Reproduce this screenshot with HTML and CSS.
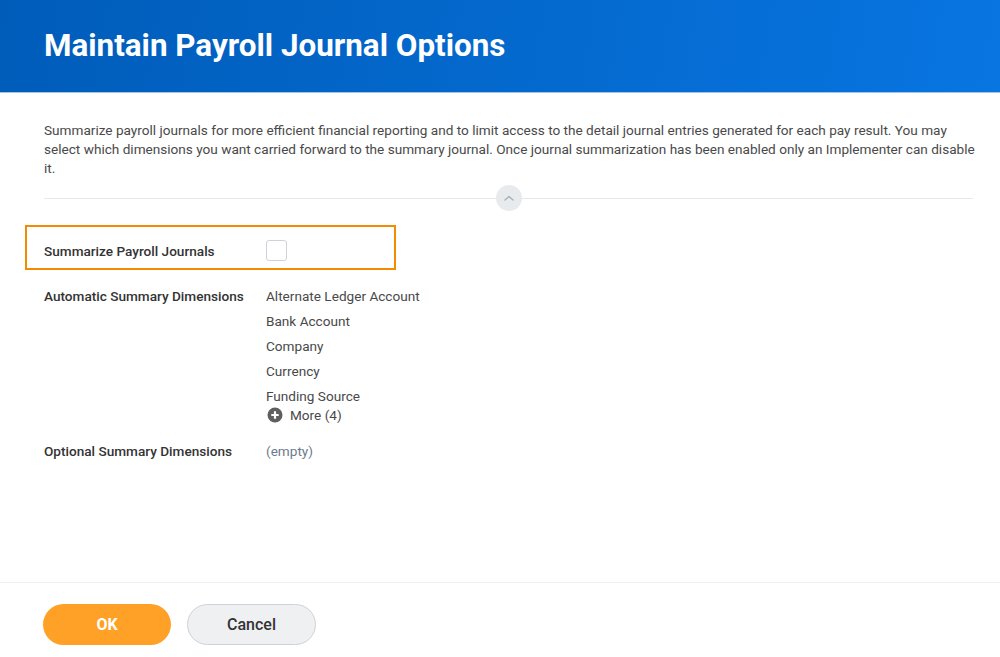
FILE: index.html
```html
<!DOCTYPE html>
<html>
<head>
<meta charset="utf-8">
<link rel="stylesheet" href="styles.css">
</head>
<body>
<div class="page">
  <header class="header">
    <h1 class="title">Maintain Payroll Journal Options</h1>
  </header>
  <main class="content">
    <p class="intro">Summarize payroll journals for more efficient financial reporting and to limit access to the detail journal entries generated for each pay result. You may select which dimensions you want carried forward to the summary journal. Once journal summarization has been enabled only an Implementer can disable it.</p>
    <div class="divider">
      <span class="collapse">
        <svg width="12" height="8" viewBox="0 0 12 8"><path d="M2 6 L6 2.5 L10 6" fill="none" stroke="#a6afb8" stroke-width="1.4" stroke-linecap="round" stroke-linejoin="round"/></svg>
      </span>
    </div>
    <div class="highlight">
      <div class="label">Summarize Payroll Journals</div>
      <span class="checkbox"></span>
    </div>
    <div class="field">
      <div class="label">Automatic Summary Dimensions</div>
      <div class="values">
        <div class="value">Alternate Ledger Account</div>
        <div class="value">Bank Account</div>
        <div class="value">Company</div>
        <div class="value">Currency</div>
        <div class="value">Funding Source</div>
        <div class="more">
          <svg width="16" height="16" viewBox="0 0 16 16"><circle cx="8" cy="8" r="7.5" fill="#5f5f5f"/><path d="M8 4.3 V11.7 M4.3 8 H11.7" stroke="#fff" stroke-width="2.2"/></svg>
          <span>More (4)</span>
        </div>
      </div>
    </div>
    <div class="field optional">
      <div class="label">Optional Summary Dimensions</div>
      <div class="values"><div class="empty">(empty)</div></div>
    </div>
  </main>
  <footer class="footer">
    <button class="btn btn-ok">OK</button>
    <button class="btn btn-cancel">Cancel</button>
  </footer>
</div>
</body>
</html>
```
FILE: styles.css
```css
html, body {
  margin: 0;
  padding: 0;
  background: #fff;
}
body {
  font-family: Roboto, "Liberation Sans", Arial, sans-serif;
  color: #333;
}
.page {
  height: 657px;
  display: flex;
  flex-direction: column;
  overflow: hidden;
}
.header {
  height: 92px;
  flex: none;
  background: linear-gradient(100deg, #005cb9 0%, #0875e1 100%);
  border-bottom: 1px solid #9cc4ee;
  display: flex;
  align-items: center;
  padding-left: 44px;
  box-sizing: content-box;
}
.title {
  margin: 0;
  color: #fff;
  font-size: 31.4px;
  font-weight: 700;
  letter-spacing: 0;
  padding-bottom: 2px;
}
.content {
  flex: 1;
  padding: 0 27px 0 44px;
}
.intro {
  margin: 28px -8px 0 0;
  font-size: 13.6px;
  line-height: 19px;
  color: #494949;
}
.divider {
  margin-top: 20px;
  height: 1px;
  background: #e6e8ea;
  position: relative;
}
.collapse {
  position: absolute;
  left: 452px;
  top: -13px;
  width: 26px;
  height: 26px;
  border-radius: 50%;
  background: #e8ebee;
  display: flex;
  align-items: center;
  justify-content: center;
}
.highlight {
  margin: 26px 0 0 -19px;
  width: 350px;
  height: 35px;
  border: 2px solid #f38b00;
  display: flex;
  align-items: center;
  padding: 6px 0 0 17px;
}
.label {
  width: 222px;
  flex: none;
  font-size: 13.6px;
  font-weight: 500;
  color: #333;
}
.checkbox {
  width: 19px;
  height: 19px;
  border: 1px solid #ced3d9;
  border-radius: 3px;
  background: #fff;
}
.field {
  display: flex;
  margin-top: 18px;
  font-size: 13.6px;
  line-height: 16px;
}
.values {
  display: flex;
  flex-direction: column;
}
.value {
  color: #494949;
  margin-bottom: 9px;
}
.more {
  display: flex;
  align-items: center;
  gap: 7px;
  margin-top: -6px;
  margin-left: 1px;
  color: #494949;
}
.optional {
  margin-top: 20px;
}
.empty {
  color: #6b7b8c;
}
.footer {
  flex: none;
  height: 75px;
  border-top: 1px solid #eceeef;
  display: flex;
  align-items: flex-start;
  padding: 21px 0 0 43px;
  box-sizing: border-box;
  gap: 16px;
}
.btn {
  height: 41px;
  border-radius: 21px;
  font-family: Roboto, "Liberation Sans", Arial, sans-serif;
  font-size: 16px;
  cursor: pointer;
}
.btn-ok {
  width: 128px;
  background: #ffa126;
  border: none;
  color: #fff;
  font-weight: 700;
}
.btn-cancel {
  width: 129px;
  background: #eef0f2;
  border: 1px solid #ced3d9;
  color: #333;
  font-weight: 500;
}
```
